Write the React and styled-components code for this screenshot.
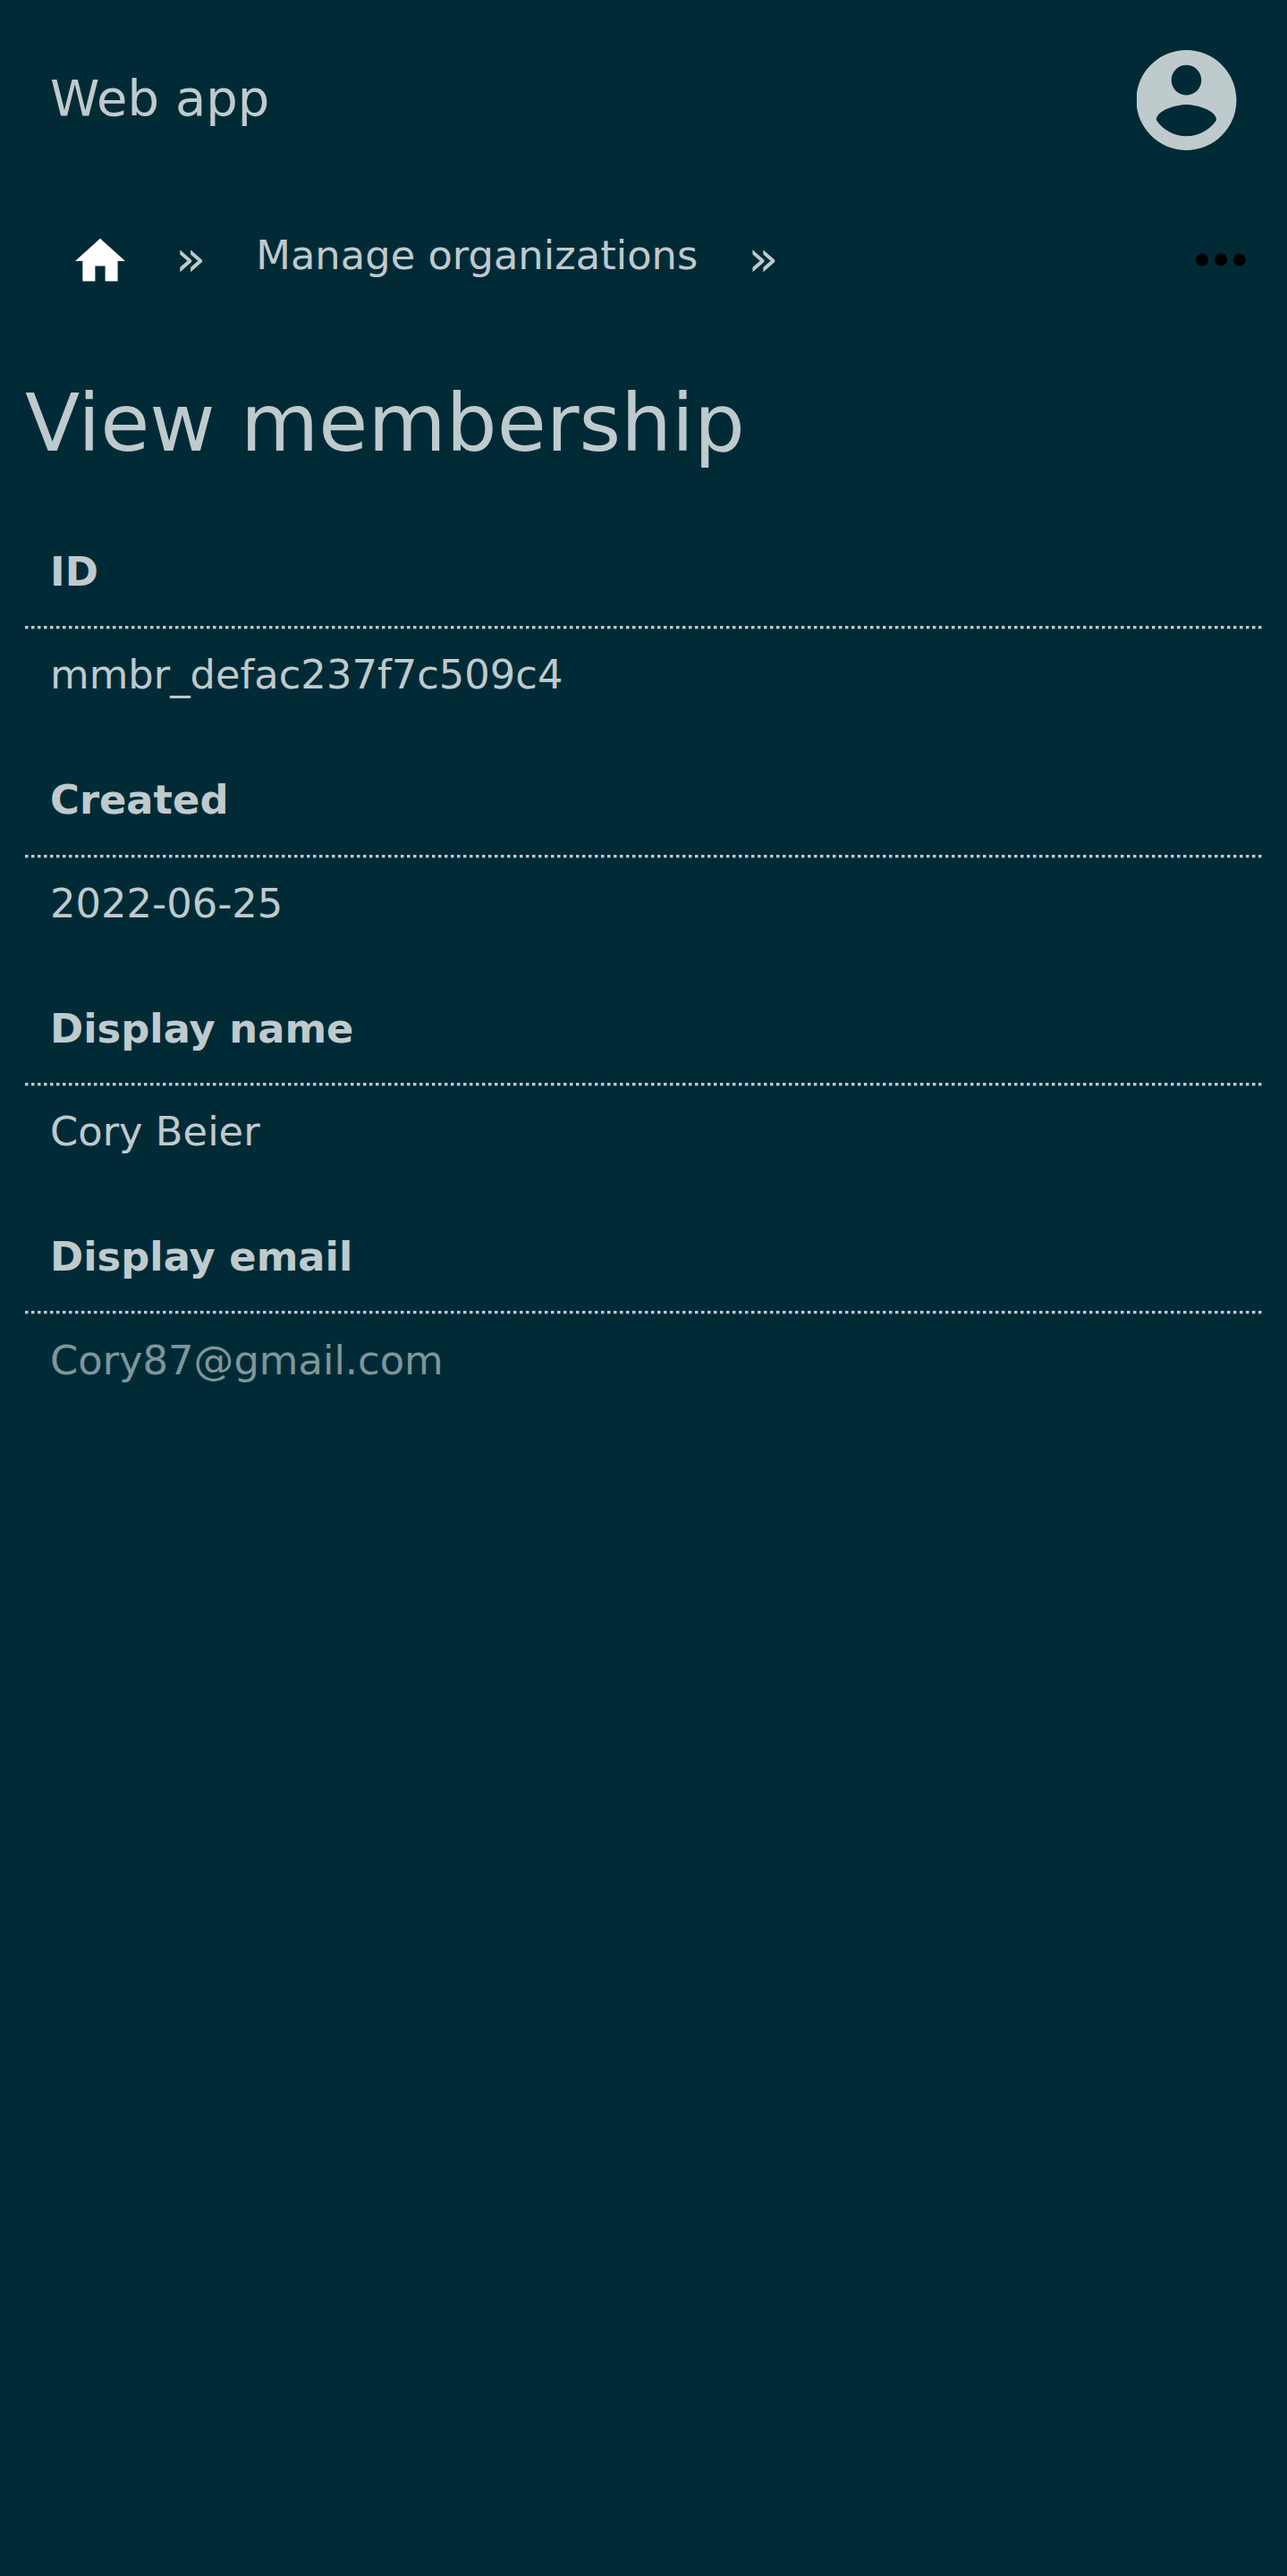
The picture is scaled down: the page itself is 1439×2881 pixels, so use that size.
import React from "react";
import styled, { createGlobalStyle } from "styled-components";

const GlobalStyle = createGlobalStyle`
  * { box-sizing: border-box; }
  body {
    margin: 0;
    background: #002b36;
    color: #bfcacd;
    font-family: "DejaVu Sans", sans-serif;
    font-size: 44.8px;
    line-height: 53px;
  }
`;

const Page = styled.div`
  min-height: 2881px;
  display: flex;
  flex-direction: column;
`;

const Header = styled.header`
  height: 224px;
  padding: 0 56px;
  display: flex;
  align-items: center;
  justify-content: space-between;
`;

const Brand = styled.span`
  padding-bottom: 5px;
  font-size: 56px;
  line-height: 65px;
`;

const Icon = styled.svg`
  display: block;
  flex: none;
  width: ${(p) => p.$size}px;
  height: ${(p) => p.$size}px;
  fill: ${(p) => p.$color || "currentColor"};
`;

const Breadcrumbs = styled.nav`
  height: 132px;
  padding: 24px 32px 0 84px;
  display: flex;
  align-items: flex-start;
  justify-content: space-between;
`;

const Trail = styled.div`
  display: flex;
  align-items: flex-start;
  gap: 56px;
`;

const HomeLink = styled.a`
  padding-top: 16px;
`;

const Separator = styled.span`
  padding-top: 7.5px;
  font-size: 56px;
  line-height: 65px;
`;

const Crumb = styled.a`
  padding-top: 11px;
`;

const Title = styled.h1`
  margin: 65px 28px 0;
  font-size: 89.6px;
  line-height: 104px;
  font-weight: 400;
`;

const Fields = styled.dl`
  margin: 87.9px 28px 0;
  display: flex;
  flex-direction: column;
  gap: 87.1px;
`;

const Label = styled.dt`
  padding: 0 28px 34.2px;
  font-weight: 700;
`;

const Rule = styled.div`
  height: 4px;
  background:
    linear-gradient(to bottom, transparent 3px, rgba(0, 43, 54, 0.7) 3px),
    repeating-linear-gradient(
      to right,
      #bfcacd 0 3px,
      #5f7a81 3px 4px,
      transparent 4px 7px
    );
`;

const Value = styled.dd`
  margin: 0;
  padding: 24.2px 28px 0;
  color: ${(p) => (p.$muted ? "#80959b" : "inherit")};
`;

const fields = [
  { label: "ID", value: "mmbr_defac237f7c509c4" },
  { label: "Created", value: "2022-06-25" },
  { label: "Display name", value: "Cory Beier" },
  { label: "Display email", value: "Cory87@gmail.com", muted: true },
];

export default function App() {
  return (
    <Page>
      <GlobalStyle />
      <Header>
        <Brand>Web app</Brand>
        <Icon $size={112} viewBox="2.09 2 20 20">
          <path d="M12 2C6.48 2 2 6.48 2 12s4.48 10 10 10 10-4.48 10-10S17.52 2 12 2zm0 3c1.66 0 3 1.34 3 3s-1.34 3-3 3-3-1.34-3-3 1.34-3 3-3zm0 14.2c-2.5 0-4.71-1.28-6-3.22.03-1.99 4-3.08 6-3.08 1.99 0 5.97 1.09 6 3.08-1.29 1.94-3.5 3.22-6 3.22z" />
        </Icon>
      </Header>
      <Breadcrumbs>
        <Trail>
          <HomeLink>
            <Icon $size={56} $color="#fff" viewBox="2 2 20 20">
              <path d="M10 20v-6h4v6h5v-8h3L12 3 2 12h3v8z" />
            </Icon>
          </HomeLink>
          <Separator>»</Separator>
          <Crumb>Manage organizations</Crumb>
          <Separator>»</Separator>
        </Trail>
        <Icon $size={84} $color="#000" viewBox="0 -0.14 24 24">
          <circle cx="6" cy="12" r="2" />
          <circle cx="12" cy="12" r="2" />
          <circle cx="18" cy="12" r="2" />
        </Icon>
      </Breadcrumbs>
      <Title>View membership</Title>
      <Fields>
        {fields.map((f) => (
          <div key={f.label}>
            <Label>{f.label}</Label>
            <Rule />
            <Value $muted={f.muted}>{f.value}</Value>
          </div>
        ))}
      </Fields>
    </Page>
  );
}
